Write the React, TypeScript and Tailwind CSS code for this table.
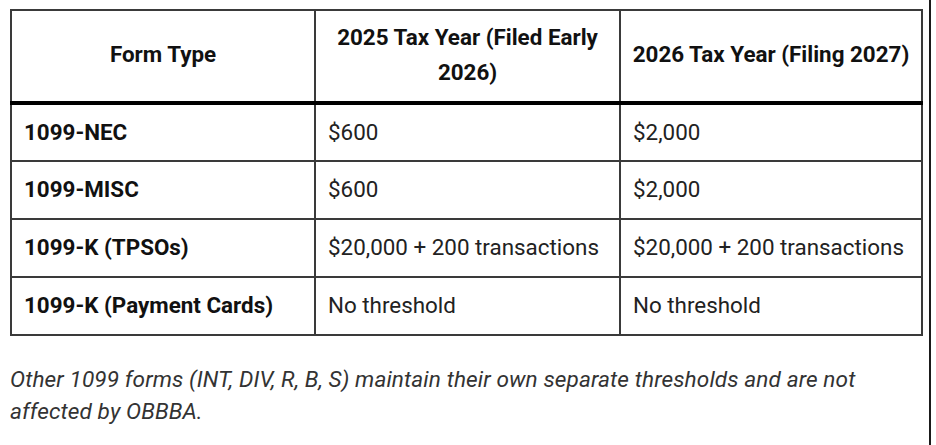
import React from "react";

const rows = [
  ["1099-NEC", "$600", "$2,000"],
  ["1099-MISC", "$600", "$2,000"],
  ["1099-K (TPSOs)", "$20,000 + 200 transactions", "$20,000 + 200 transactions"],
  ["1099-K (Payment Cards)", "No threshold", "No threshold"],
];

export default function App() {
  return (
    <div
      className="w-[936px] h-[445px] bg-white overflow-hidden flex"
      style={{ fontFamily: "Roboto, 'Liberation Sans', sans-serif" }}
    >
      <div className="w-[931px] h-full pt-[9px] pl-[10px] border-r-2 border-[#1a1a1a]">
        <table className="w-[913px] border-collapse table-fixed border-2 border-[#3a3a3a]">
          <thead>
            <tr className="h-[93px]">
              <th className="w-[304px] border-2 border-[#3a3a3a] border-b-[4px] border-b-black px-3 pb-[3px] text-center font-bold text-[22.4px] leading-[35px] text-[#111]">
                Form Type
              </th>
              <th className="w-[305px] border-2 border-[#3a3a3a] border-b-[4px] border-b-black px-3 pb-[3px] text-center font-bold text-[22.4px] leading-[35px] text-[#111]">
                2025 Tax Year (Filed Early 2026)
              </th>
              <th className="border-2 border-[#3a3a3a] border-b-[4px] border-b-black px-1 pb-[3px] text-center font-bold text-[22.4px] leading-[35px] text-[#111]">
                2026 Tax Year (Filing 2027)
              </th>
            </tr>
          </thead>
          <tbody>
            {rows.map((r) => (
              <tr key={r[0]} className="h-[58px]">
                <td className="border-2 border-[#3a3a3a] pl-3 font-bold text-[22.4px] text-[#111]">
                  {r[0]}
                </td>
                <td className="border-2 border-[#3a3a3a] pl-3 text-[22.4px] text-[#222]">
                  {r[1]}
                </td>
                <td className="border-2 border-[#3a3a3a] pl-3 text-[22.4px] text-[#222]">
                  {r[2]}
                </td>
              </tr>
            ))}
          </tbody>
        </table>
        <p className="mt-[28px] italic text-[22.6px] leading-[32px] text-[#333] whitespace-nowrap tracking-[0.1px]">
          Other 1099 forms (INT, DIV, R, B, S) maintain their own separate thresholds and are not
          <br />
          affected by OBBBA.
        </p>
      </div>
    </div>
  );
}
